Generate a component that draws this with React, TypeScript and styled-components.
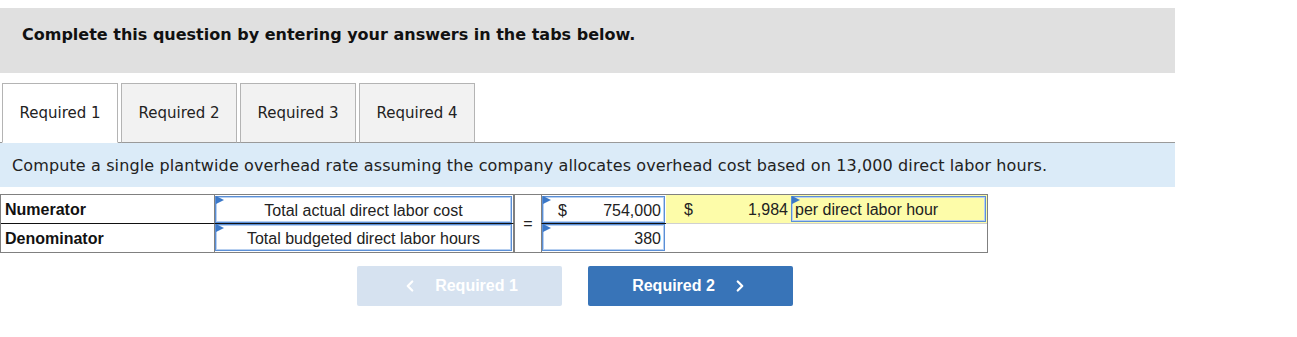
import React from "react"
import styled, {createGlobalStyle} from "styled-components"
import {ChevronLeft, ChevronRight} from "lucide-react"

const GlobalStyle = createGlobalStyle`
    body {
        margin: 0;
        background: #ffffff;
        font-family: "DejaVu Sans", Verdana, sans-serif;
    }
`

const Page = styled.div`
    width: 1175px;
    padding-top: 8px;
`

const Banner = styled.div`
    background: #e0e0e0;
    height: 65px;
    box-sizing: border-box;
    padding: 17px 22px 0;
    font-size: 16px;
    line-height: 20px;
    font-weight: bold;
    color: #111111;
`

const TabRow = styled.div`
    display: flex;
    gap: 3px;
    margin-top: 10px;
    padding-left: 2px;
    border-bottom: 1px solid #9a9a9a;
`

const Tab = styled.div<{ readonly active?: boolean }>`
    width: 116px;
    height: 60px;
    box-sizing: border-box;
    margin-bottom: -1px;
    display: flex;
    align-items: center;
    justify-content: center;
    border: 1px solid #b4b4b4;
    border-bottom: 1px solid ${({active}) => active ? "#ffffff" : "#9a9a9a"};
    background: ${({active}) => active ? "#ffffff" : "#f2f2f2"};
    font-size: 15px;
    color: #222222;
`

const Instruction = styled.div`
    background: #dbebf8;
    height: 44px;
    padding-left: 12px;
    display: flex;
    align-items: center;
    font-size: 16px;
    letter-spacing: 0.12px;
    color: #222222;
`

const Grid = styled.div`
    margin-top: 7px;
    width: 988px;
    box-sizing: border-box;
    border: 1px solid #808080;
    display: grid;
    grid-template-columns: 213px 300px 27px 125px 126px 195px;
    grid-template-rows: 29px 28px;
    font-family: "Liberation Sans", Arial, sans-serif;
    font-size: 16px;
    color: #222222;
`

const Label = styled.div<{ readonly top?: boolean }>`
    font-weight: bold;
    padding: 2px 0 0 4px;
    display: flex;
    align-items: center;
    color: #111111;
    border-bottom: ${({top}) => top ? "1px solid #111111" : "none"};
`

const Slot = styled.div<{ readonly top?: boolean; readonly edge?: boolean }>`
    display: flex;
    border-left: 1px solid #808080;
    border-right: ${({edge}) => edge ? "1px solid #808080" : "none"};
    border-bottom: ${({top}) => top ? "1px solid #111111" : "none"};
    padding: ${({top}) => top ? "1px 1px 0 0" : "0 1px 1px 0"};
`

const Field = styled.div<{ readonly align?: "left" | "center" | "right" }>`
    position: relative;
    flex: 1;
    display: flex;
    align-items: center;
    justify-content: ${({align}) => align === "left" ? "flex-start" : align === "right" ? "space-between" : "center"};
    border: 1px solid #5b8fd6;
    box-shadow: inset 0 0 0 1px #b8d0f0;
    padding: 2px 3px 0;
    background: transparent;
    &::before {
        content: "";
        position: absolute;
        top: 0;
        left: 0;
        border-top: 4px solid transparent;
        border-bottom: 4px solid transparent;
        border-left: 8px solid #3b78c8;
        transform: translateY(-1px);
    }
`

const Dollar = styled.span<{ readonly inset: number }>`
    padding-left: ${({inset}) => inset}px;
`

const Equals = styled.div`
    grid-row: 1 / span 2;
    grid-column: 3;
    display: flex;
    align-items: center;
    justify-content: center;
    border-left: 1px solid #808080;
`

const Result = styled.div`
    grid-column: 5 / span 2;
    background: #fdfca9;
    display: flex;
    align-items: center;
    padding: 1px 1px 1px 0;
    border-bottom: 1px solid #d0d0d0;
`

const ResultAmount = styled.div`
    width: 125px;
    display: flex;
    justify-content: space-between;
    padding: 2px 3px 0 18px;
    box-sizing: border-box;
`

const UnitField = styled(Field)`
    height: 100%;
    box-sizing: border-box;
`

const Blank = styled.div`
    grid-column: 5 / span 2;
`

const Buttons = styled.div`
    display: flex;
    gap: 26px;
    margin-top: 13px;
    padding-left: 357px;
`

const NavButton = styled.div<{ readonly disabled?: boolean }>`
    width: 205px;
    height: 40px;
    border-radius: 2px;
    display: flex;
    align-items: center;
    justify-content: center;
    gap: 16px;
    background: ${({disabled}) => disabled ? "#d6e2f0" : "#3874b8"};
    color: #ffffff;
    font-family: "Liberation Sans", Arial, sans-serif;
    font-weight: bold;
    font-size: 16px;
`

export default function App() {
    return <Page>
        <GlobalStyle/>
        <Banner>Complete this question by entering your answers in the tabs below.</Banner>
        <TabRow>
            <Tab active>Required 1</Tab>
            <Tab>Required 2</Tab>
            <Tab>Required 3</Tab>
            <Tab>Required 4</Tab>
        </TabRow>
        <Instruction>
            Compute a single plantwide overhead rate assuming the company allocates overhead cost based on 13,000 direct labor hours.
        </Instruction>
        <Grid>
            <Label top>Numerator</Label>
            <Slot top edge><Field>Total actual direct labor cost</Field></Slot>
            <Equals>=</Equals>
            <Slot top><Field align="right"><Dollar inset={12}>$</Dollar><span>754,000</span></Field></Slot>
            <Result>
                <ResultAmount><span>$</span><span>1,984</span></ResultAmount>
                <UnitField align="left">per direct labor hour</UnitField>
            </Result>

            <Label>Denominator</Label>
            <Slot edge><Field>Total budgeted direct labor hours</Field></Slot>
            <Slot><Field align="right"><span/><span>380</span></Field></Slot>
            <Blank/>
        </Grid>
        <Buttons>
            <NavButton disabled><ChevronLeft size={18} strokeWidth={3}/>Required 1</NavButton>
            <NavButton>Required 2<ChevronRight size={18} strokeWidth={3}/></NavButton>
        </Buttons>
    </Page>
}
